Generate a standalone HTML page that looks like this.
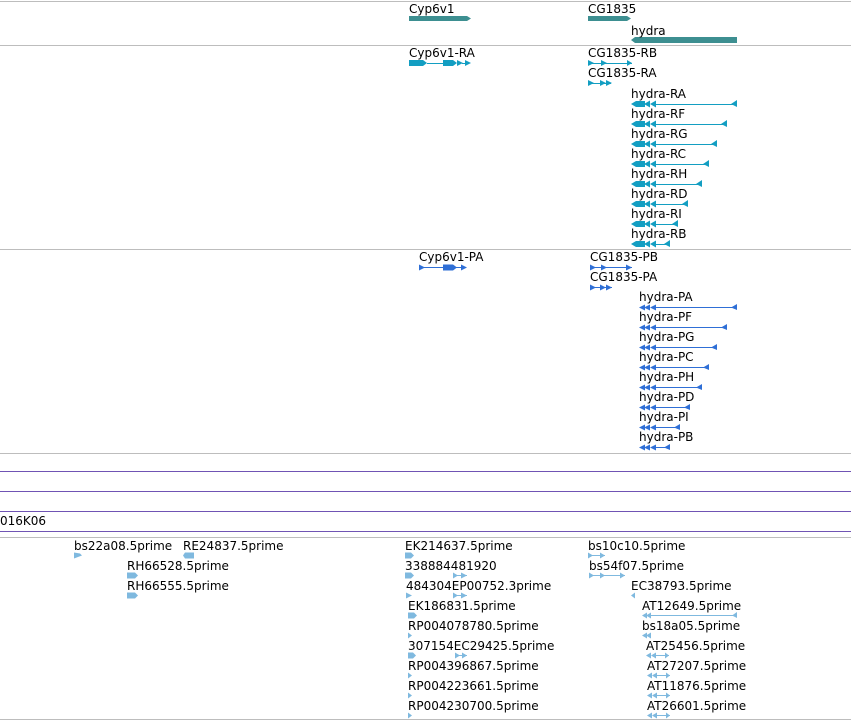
<!DOCTYPE html>
<html><head><meta charset="utf-8"><style>
html,body{margin:0;padding:0;background:#fff;width:851px;height:721px;overflow:hidden}
svg text{font-family:"DejaVu Sans","Liberation Sans",sans-serif;font-size:12px;fill:#000}
</style></head><body>
<svg width="851" height="721" xmlns="http://www.w3.org/2000/svg">
<g fill="#bdbdbd">
<rect x="0" y="1" width="851" height="1"/><rect x="0" y="45" width="851" height="1"/>
<rect x="0" y="249" width="851" height="1"/><rect x="0" y="453" width="851" height="1"/>
<rect x="0" y="537" width="851" height="1"/><rect x="0" y="719" width="851" height="1"/>
</g>
<g fill="#7054b4">
<rect x="0" y="471" width="851" height="1"/><rect x="0" y="491" width="851" height="1"/>
<rect x="0" y="511" width="851" height="1"/><rect x="0" y="531" width="851" height="1"/>
</g>
<!-- genes -->
<g fill="#3d8f91">
<polygon points="409,16 467,16 471,18.5 467,21 409,21"/>
<polygon points="588,16 627,16 631,18.5 627,21 588,21"/>
<polygon points="631,40 635,37 737,37 737,43 635,43"/>
</g>
<text x="409" y="13">Cyp6v1</text><text x="588" y="13">CG1835</text><text x="631" y="35">hydra</text>
<!-- transcripts -->
<g fill="#139ec2" stroke="#139ec2">
<polygon stroke="none" points="409,60 423,60 427,63 423,66 409,66"/><line x1="427" y1="63.5" x2="443" y2="63.5"/>
<polygon stroke="none" points="443,60 453,60 457,63 453,66 443,66"/><polygon stroke="none" points="457,60 463,63 457,66"/>
<line x1="462" y1="63.5" x2="466" y2="63.5"/><polygon stroke="none" points="465,60 471,63 465,66"/>
<polygon stroke="none" points="588,60 594,63 588,66"/><line x1="588" y1="63.5" x2="632" y2="63.5"/><polygon stroke="none" points="601,60 607,63 601,66"/><polygon stroke="none" points="627,60 632,63 627,66"/>
<polygon stroke="none" points="588,80 594,83 588,86"/><line x1="588" y1="83.5" x2="611" y2="83.5"/><polygon stroke="none" points="600,80 606,83 600,86"/><polygon stroke="none" points="606,80 612,83 606,86"/>
</g>
<text x="409" y="57">Cyp6v1-RA</text><text x="588" y="57">CG1835-RB</text><text x="588" y="77">CG1835-RA</text>
<g fill="#139ec2" stroke="#139ec2">
<g id="h"><polygon stroke="none" points="631,104 636,101 645,101 645,107 636,107"/><polygon stroke="none" points="644,104 650,100.5 650,107.5"/><polygon stroke="none" points="650,104 656,100.5 656,107.5"/></g>
<line x1="656" y1="104.5" x2="737" y2="104.5"/><polygon stroke="none" points="731,104 737,100 737,107"/>
<use href="#h" y="20"/><line x1="656" y1="124.5" x2="727" y2="124.5"/><polygon stroke="none" points="721,124 727,120 727,127"/>
<use href="#h" y="40"/><line x1="656" y1="144.5" x2="717" y2="144.5"/><polygon stroke="none" points="711,144 717,140 717,147"/>
<use href="#h" y="60"/><line x1="656" y1="164.5" x2="709" y2="164.5"/><polygon stroke="none" points="703,164 709,160 709,167"/>
<use href="#h" y="80"/><line x1="656" y1="184.5" x2="702" y2="184.5"/><polygon stroke="none" points="696,184 702,180 702,187"/>
<use href="#h" y="100"/><line x1="656" y1="204.5" x2="688" y2="204.5"/><polygon stroke="none" points="682,204 688,200 688,207"/>
<use href="#h" y="120"/><line x1="656" y1="224.5" x2="678" y2="224.5"/><polygon stroke="none" points="672,224 678,220 678,227"/>
<use href="#h" y="140"/><line x1="656" y1="244.5" x2="670" y2="244.5"/><polygon stroke="none" points="664,244 670,240 670,247"/>
</g>
<text x="631" y="98">hydra-RA</text><text x="631" y="118">hydra-RF</text><text x="631" y="138">hydra-RG</text><text x="631" y="158">hydra-RC</text><text x="631" y="178">hydra-RH</text><text x="631" y="198">hydra-RD</text><text x="631" y="218">hydra-RI</text><text x="631" y="238">hydra-RB</text>
<!-- proteins -->
<g fill="#2f6fd6" stroke="#2f6fd6">
<polygon stroke="none" points="419,264.5 425,267.5 419,270.5"/><line x1="419" y1="267.5" x2="466" y2="267.5"/>
<polygon stroke="none" points="443,264.5 453,264.5 457,267.5 453,270.5 443,270.5"/><polygon stroke="none" points="461,264.5 467,267.5 461,270.5"/>
<polygon stroke="none" points="590,264.5 596,267.5 590,270.5"/><line x1="590" y1="267.5" x2="632" y2="267.5"/><polygon stroke="none" points="601,264.5 607,267.5 601,270.5"/><polygon stroke="none" points="626,264.5 632,267.5 626,270.5"/>
<polygon stroke="none" points="590,284.5 596,287.5 590,290.5"/><line x1="590" y1="287.5" x2="612" y2="287.5"/><polygon stroke="none" points="600,284.5 606,287.5 600,290.5"/><polygon stroke="none" points="606,284.5 612,287.5 606,290.5"/>
<g id="p"><polygon stroke="none" points="639,307.5 645,304.5 645,310.5"/><polygon stroke="none" points="644,307.5 650,304.5 650,310.5"/><polygon stroke="none" points="650,307.5 656,304.5 656,310.5"/></g>
<line x1="655" y1="307.5" x2="737" y2="307.5"/><polygon stroke="none" points="731,307.5 737,304 737,310"/>
<use href="#p" y="20"/><line x1="655" y1="327.5" x2="727" y2="327.5"/><polygon stroke="none" points="721,327.5 727,324 727,330"/>
<use href="#p" y="40"/><line x1="655" y1="347.5" x2="717" y2="347.5"/><polygon stroke="none" points="711,347.5 717,344 717,350"/>
<use href="#p" y="60"/><line x1="655" y1="367.5" x2="709" y2="367.5"/><polygon stroke="none" points="703,367.5 709,364 709,370"/>
<use href="#p" y="80"/><line x1="655" y1="387.5" x2="702" y2="387.5"/><polygon stroke="none" points="696,387.5 702,384 702,390"/>
<use href="#p" y="100"/><line x1="655" y1="407.5" x2="690" y2="407.5"/><polygon stroke="none" points="684,407.5 690,404 690,410"/>
<use href="#p" y="120"/><line x1="655" y1="427.5" x2="680" y2="427.5"/><polygon stroke="none" points="674,427.5 680,424 680,430"/>
<use href="#p" y="140"/><line x1="655" y1="447.5" x2="670" y2="447.5"/><polygon stroke="none" points="664,447.5 670,444 670,450"/>
</g>
<text x="419" y="261">Cyp6v1-PA</text><text x="590" y="261">CG1835-PB</text><text x="590" y="281">CG1835-PA</text>
<text x="639" y="301">hydra-PA</text><text x="639" y="321">hydra-PF</text><text x="639" y="341">hydra-PG</text><text x="639" y="361">hydra-PC</text><text x="639" y="381">hydra-PH</text><text x="639" y="401">hydra-PD</text><text x="639" y="421">hydra-PI</text><text x="639" y="441">hydra-PB</text>
<text x="0" y="525">016K06</text>
<!-- ESTs -->
<g fill="#7fb9df" stroke="#7fb9df">
<polygon stroke="none" points="74,552.5 80,553.5 82,555.5 74,558.5"/>
<polygon stroke="none" points="183,555.5 185,552.5 194,552.5 194,558.5 185,558.5"/>
<polygon stroke="none" points="127,572.5 135,572.5 138,575.5 135,578.5 127,578.5"/>
<polygon stroke="none" points="127,592.5 135,592.5 138,595.5 135,598.5 127,598.5"/>
<polygon stroke="none" points="405,552.5 411,552.5 414,555.5 411,558.5 405,558.5"/>
<polygon stroke="none" points="405,572.5 411,572.5 414,575.5 411,578.5 405,578.5"/>
<polygon stroke="none" points="453,572.5 458,575.5 453,578.5"/><line x1="453" y1="575.5" x2="467" y2="575.5"/><polygon stroke="none" points="461,572.5 467,575.5 461,578.5"/>
<polygon stroke="none" points="406,592.5 412,595.5 406,598.5"/>
<polygon stroke="none" points="453,592.5 458,595.5 453,598.5"/><line x1="453" y1="595.5" x2="467" y2="595.5"/><polygon stroke="none" points="461,592.5 467,595.5 461,598.5"/>
<polygon stroke="none" points="408,612.5 414,612.5 417,615.5 414,618.5 408,618.5"/>
<polygon stroke="none" points="408,632.5 412,635.5 408,638.5"/>
<polygon stroke="none" points="408,652.5 413,652.5 416,655.5 413,658.5 408,658.5"/>
<polygon stroke="none" points="455,652.5 460,655.5 455,658.5"/><line x1="455" y1="655.5" x2="467" y2="655.5"/><polygon stroke="none" points="462,652.5 467,655.5 462,658.5"/>
<polygon stroke="none" points="408,672.5 412,675.5 408,678.5"/>
<polygon stroke="none" points="408,692.5 412,695.5 408,698.5"/>
<polygon stroke="none" points="408,712.5 412,715.5 408,718.5"/>
<polygon stroke="none" points="588,552.5 593,555.5 588,558.5"/><line x1="588" y1="555.5" x2="605" y2="555.5"/><polygon stroke="none" points="600,552.5 605,555.5 600,558.5"/>
<polygon stroke="none" points="589,572.5 594,575.5 589,578.5"/><line x1="589" y1="575.5" x2="625" y2="575.5"/><polygon stroke="none" points="600,572.5 605,575.5 600,578.5"/><polygon stroke="none" points="620,572.5 625,575.5 620,578.5"/>
<polygon stroke="none" points="631,595.5 635,592.5 635,598.5"/>
<polygon stroke="none" points="642,615.5 647,612.5 647,618.5"/><polygon stroke="none" points="646,615.5 651,612.5 651,618.5"/><line x1="650" y1="615.5" x2="737" y2="615.5"/><polygon stroke="none" points="732,615.5 737,612 737,618"/>
<polygon stroke="none" points="642,635.5 647,632.5 647,638.5"/><polygon stroke="none" points="646,635.5 651,632.5 651,638.5"/>
<g id="e"><polygon stroke="none" points="646,655.5 651,652.5 651,658.5"/><polygon stroke="none" points="651,655.5 656,652.5 656,658.5"/><line x1="655" y1="655.5" x2="669" y2="655.5"/><polygon stroke="none" points="665,652.5 669,655.5 665,658.5"/></g>
<use href="#e" x="1" y="20"/><use href="#e" x="1" y="40"/><use href="#e" x="1" y="60"/>
</g>
<text x="74" y="550">bs22a08.5prime</text><text x="183" y="550">RE24837.5prime</text>
<text x="127" y="570">RH66528.5prime</text><text x="127" y="590">RH66555.5prime</text>
<text x="405" y="550">EK214637.5prime</text><text x="405" y="570">338884481920</text>
<text x="406" y="590">484304EP00752.3prime</text><text x="408" y="610">EK186831.5prime</text>
<text x="408" y="630">RP004078780.5prime</text><text x="408" y="650">307154EC29425.5prime</text>
<text x="408" y="670">RP004396867.5prime</text><text x="408" y="690">RP004223661.5prime</text>
<text x="408" y="710">RP004230700.5prime</text>
<text x="588" y="550">bs10c10.5prime</text><text x="589" y="570">bs54f07.5prime</text>
<text x="631" y="590">EC38793.5prime</text><text x="642" y="610">AT12649.5prime</text>
<text x="642" y="630">bs18a05.5prime</text><text x="646" y="650">AT25456.5prime</text>
<text x="647" y="670">AT27207.5prime</text><text x="647" y="690">AT11876.5prime</text>
<text x="647" y="710">AT26601.5prime</text>
</svg>
</body></html>
